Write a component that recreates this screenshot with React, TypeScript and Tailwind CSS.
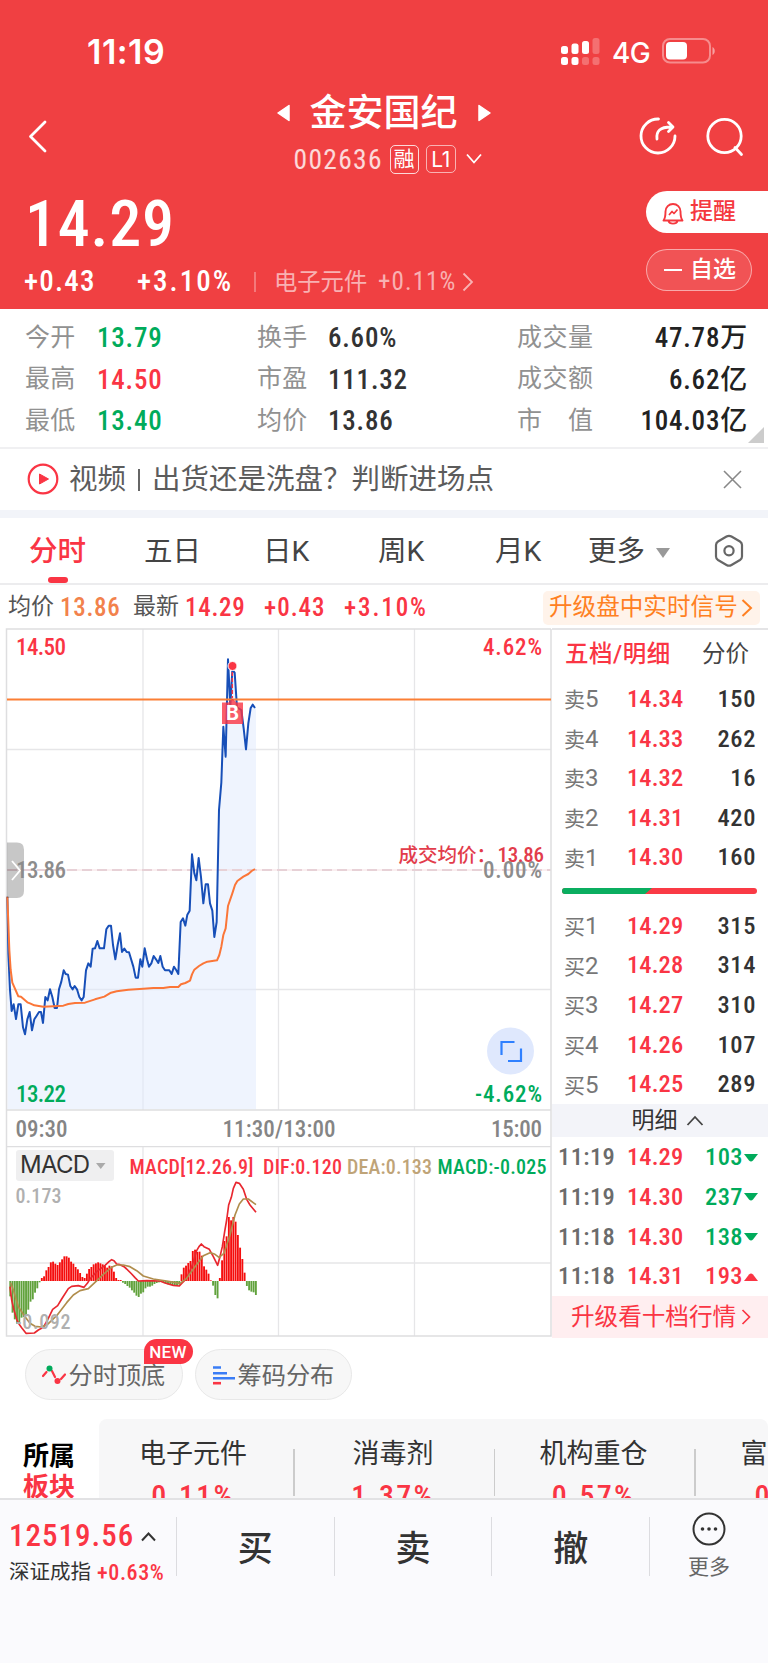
import React, { useState } from "react";

const stats = [
  [
    { label: "今开", value: "13.79", color: "text-[#00ab5b]" },
    { label: "换手", value: "6.60%", color: "text-[#333]" },
    { label: "成交量", value: "47.78万", color: "text-[#222]" },
  ],
  [
    { label: "最高", value: "14.50", color: "text-[#fa3544]" },
    { label: "市盈", value: "111.32", color: "text-[#333]" },
    { label: "成交额", value: "6.62亿", color: "text-[#222]" },
  ],
  [
    { label: "最低", value: "13.40", color: "text-[#00ab5b]" },
    { label: "均价", value: "13.86", color: "text-[#333]" },
    { label: "市　值", value: "104.03亿", color: "text-[#222]" },
  ],
];

const tabs = [
  { name: "分时", width: "w-[115px]" },
  { name: "五日", width: "w-[119px]" },
  { name: "日K", width: "w-[115px]" },
  { name: "周K", width: "w-[117px]" },
  { name: "月K", width: "w-[93px]" },
];

const sells = [
  ["卖5", "14.34", "150"],
  ["卖4", "14.33", "262"],
  ["卖3", "14.32", "16"],
  ["卖2", "14.31", "420"],
  ["卖1", "14.30", "160"],
];

const buys = [
  ["买1", "14.29", "315"],
  ["买2", "14.28", "314"],
  ["买3", "14.27", "310"],
  ["买4", "14.26", "107"],
  ["买5", "14.25", "289"],
];

const trades = [
  { time: "11:19", price: "14.29", amount: "103", up: false },
  { time: "11:19", price: "14.30", amount: "237", up: false },
  { time: "11:18", price: "14.30", amount: "138", up: false },
  { time: "11:18", price: "14.31", amount: "193", up: true },
];

const sectors = [
  { name: "电子元件", value: "0.11%" },
  { name: "消毒剂", value: "1.37%" },
  { name: "机构重仓", value: "0.57%" },
];

// chart series are kept at 3 units per pixel
const pricePoints =
  "22,830 25,1000 30,1110 35,1173 41,1153 48,1197 55,1153 62,1153 69,1222 75,1243 82,1198 89,1176 96,1231 103,1198 110,1187 117,1176 123,1176 129,1209 136,1131 143,1141 150,1108 157,1131 164,1164 171,1164 177,1108 184,1085 191,1051 197,1062 204,1064 211,1098 218,1108 224,1098 231,1108 238,1131 245,1141 251,1131 258,1051 265,1030 272,1040 278,986 285,985 292,963 299,985 312,985 319,928 326,917 333,917 339,975 346,1018 353,975 360,940 366,996 373,986 380,996 387,997 400,1040 407,1073 414,1073 421,1018 427,1040 434,985 441,1018 447,1040 454,1030 461,1008 468,1018 475,1029 481,1008 488,1040 495,1051 508,1051 515,1062 522,1040 529,1051 535,1062 542,906 549,895 556,917 562,884 569,872 576,703 583,760 589,781 596,714 603,771 610,850 617,793 624,793 630,850 637,872 643,951 650,906 657,570 664,488 670,320 677,410 684,118 691,258 697,150 704,158 711,262 724,270 731,325 738,388 745,310 752,264 758,254 765,264";

const avgPoints =
  "22,830 25,910 28,990 32,1050 37,1088 48,1113 55,1129 63,1130 82,1147 90,1150 103,1156 130,1160 190,1157 205,1152 225,1149 255,1148 285,1138 313,1130 333,1118 350,1114 385,1109 430,1106 460,1104 490,1104 510,1101 535,1101 543,1093 556,1089 570,1082 576,1063 583,1049 597,1038 610,1030 622,1025 651,1021 658,1005 664,980 670,945 677,925 684,858 697,820 705,795 712,783 730,770 745,762 755,753 765,747";

const difPoints =
  "30,560 35,600 42,630 50,658 57,672 65,683 78,700 103,699 115,690 130,682 145,655 158,628 173,617 185,597 205,566 215,559 235,557 252,562 262,550 270,537 290,515 315,496 327,485 335,479 342,482 350,492 360,494 372,500 380,507 395,522 405,533 415,543 440,542 480,543 495,549 520,556 538,558 545,550 560,535 575,500 590,452 597,440 604,432 612,440 628,448 640,470 653,496 660,470 667,440 674,395 680,360 686,315 694,292 700,265 708,247 718,250 730,268 740,298 750,315 768,337";

const deaPoints =
  "32,548 40,570 55,620 75,650 90,670 105,679 125,681 145,671 170,647 200,608 220,585 240,572 265,566 285,547 310,523 335,502 350,495 370,495 390,500 410,512 430,528 460,537 500,543 540,550 560,535 585,500 610,467 630,458 645,463 657,472 672,460 690,405 705,345 718,312 730,297 745,297 768,314";

const macdBars = [
  -46, -95, -115, -128, -124, -110, -108, -103, -86, -62, -55, -35, -22, -4, 9, 14, 32, 42, 56, 58, 52, 48, 56, 65, 74,
  74, 70, 58, 52, 42, 35, 24, 12, 9, 22, 36, 42, 50, 53, 56, 53, 50, 45, 40, 46, 44, 28, 9, 3, 3, -5, -9, -15, -20,
  -28, -35, -44, -48, -38, -34, -22, -17, -17, -14, -9, -6, -4, -2, -4, -7, -10, -12, -12, -12, -13, -11, 20, 40, 46, 54,
  60, 90, 94, 87, 88, 76, 44, 34, 22, 2, -14, -42, -52, 9, 62, 120, 134, 192, 182, 192, 178, 138, 100, 66, 25, -15, -28,
  -32, -34, -42,
];

const StatusBar = () => (
  <div className="flex h-[88px] items-start justify-between pt-[31px] pl-[87px] pr-[52px]">
    <span className="pt-px font-['Inter'] text-[34px] leading-10 font-semibold tracking-[0.5px]">11:19</span>
    <div className="flex items-center gap-[12px] pt-px">
      <svg width="39" height="40" viewBox="0 0 39 40" fill="#fff">
        <rect x="0" y="14" width="7" height="8" rx="2.5" />
        <rect x="10.5" y="11.5" width="7" height="10.5" rx="2.5" />
        <rect x="21" y="9" width="7" height="13" rx="2.5" />
        <rect x="31.5" y="6" width="7" height="16" rx="2.5" opacity=".25" />
        <rect x="0" y="25" width="7" height="8" rx="2.5" />
        <rect x="10.5" y="25" width="7" height="8" rx="2.5" />
        <rect x="21" y="25" width="7" height="8" rx="2.5" opacity=".25" />
        <rect x="31.5" y="25" width="7" height="8" rx="2.5" opacity=".25" />
      </svg>
      <span className="pt-0.5 font-['Inter'] text-[28px] leading-[38px] font-medium tracking-[-0.6px]">4G</span>
      <svg width="54" height="40" viewBox="0 0 54 40">
        <rect x="1" y="7" width="47" height="23.5" rx="7" fill="none" stroke="#fff" strokeOpacity=".4" strokeWidth="2" />
        <rect x="4" y="10" width="21" height="17.5" rx="4" fill="#fff" />
        <path d="M50.5 15v8c3-1.5 3-6.5 0-8z" fill="#fff" opacity=".5" />
      </svg>
    </div>
  </div>
);

const Header = () => (
  <div className="h-[309px] bg-[#f04042] text-white">
    <StatusBar />
    <div className="flex h-[96px] justify-between pl-[27px] pr-[24px]">
      <svg className="mt-[31px]" width="22" height="36" viewBox="0 0 22 36" fill="none" stroke="#fff" strokeWidth="2.8" strokeLinecap="round" strokeLinejoin="round">
        <path d="M18 3 3.500 17.500 18 32" />
      </svg>
      <div className="ml-[79px] flex flex-col items-center">
        <div className="flex h-[50px] items-center gap-5">
          <svg width="13" height="18" viewBox="0 0 13 18" fill="#fff" stroke="#fff" strokeWidth="1.5" strokeLinejoin="round">
            <path d="M12 1.500v15L1 9z" />
          </svg>
          <span className="pt-px text-[37px] leading-none font-medium">金安国纪</span>
          <svg width="13" height="18" viewBox="0 0 13 18" fill="#fff" stroke="#fff" strokeWidth="1.5" strokeLinejoin="round">
            <path d="M1 1.500v15L12 9z" />
          </svg>
        </div>
        <div className="mt-px flex h-10 items-center pl-[8px]">
          <span className="w-[96px] pt-px text-[27.5px] tracking-[1.3px] text-white/80 [font-stretch:75%]">002636</span>
          <span className="flex h-[29px] w-[29px] items-center justify-center rounded-[5px] border-[1.5px] border-white/80 text-[21px] leading-none">融</span>
          <span className="ml-[7px] flex h-[28px] w-[30px] items-center justify-center rounded-[5px] border-[1.5px] border-white/60 font-['Inter'] text-[21px] leading-none tracking-[-0.5px]">L1</span>
          <svg className="ml-[10px]" width="16" height="12" viewBox="0 0 16 12" fill="none" stroke="#fff" strokeWidth="1.8">
            <path d="M1 1.500 8 9.500l7-8" />
          </svg>
        </div>
      </div>
      <div className="flex gap-[25px] pt-[28px]">
        <svg width="40" height="42" viewBox="0 0 40 42" fill="none" stroke="#fff" strokeWidth="2.8" strokeLinecap="round" strokeLinejoin="round">
          <path d="M19.500 3A17 17 0 1 0 36 20" />
          <path d="M18 23c-1-8 3-12 14-12M29.500 6.500 34 11l-4.500 4.500" />
        </svg>
        <svg width="40" height="42" viewBox="0 0 40 42" fill="none" stroke="#fff" strokeWidth="2.8" strokeLinecap="round">
          <circle cx="20.5" cy="20" r="16.7" />
          <path d="m31 31.500 6.500 7" />
        </svg>
      </div>
    </div>
    <div className="flex h-[125px] justify-between">
      <div className="flex flex-col">
        <span className="mt-[9px] pl-[25px] text-[64px] leading-[64px] font-medium tracking-[0.8px] [font-stretch:75%]">14.29</span>
        <div className="mt-[8px] flex h-[34px] items-center pl-[24px]">
          <span className="w-[113px] text-[29px] font-medium tracking-[1.2px] [font-stretch:75%]">+0.43</span>
          <span className="w-[117px] text-[29px] font-medium tracking-[2px] [font-stretch:75%]">+3.10%</span>
          <span className="h-[20px] w-[2px] bg-white/30" />
          <span className="ml-[18px] w-[104px] text-[23.3px] text-white/60">电子元件</span>
          <span className="w-[79px] text-[25px] tracking-[1.1px] text-white/60 [font-stretch:75%]">+0.11%</span>
          <svg className="ml-[5px]" width="12" height="20" viewBox="0 0 12 20" fill="none" stroke="#fff" strokeOpacity=".6" strokeWidth="1.8">
            <path d="M1.500 1.500 10 10l-8.500 8.500" />
          </svg>
        </div>
      </div>
      <div className="flex w-[122px] flex-col gap-4 pt-[7px]">
        <div className="flex h-[42px] items-center rounded-l-full bg-white pl-4 pt-px text-[23px] font-medium text-[#f5383e]">
          <svg className="mr-1.5" width="22" height="24" viewBox="0 0 22 24" fill="none" stroke="#f5383e" strokeWidth="1.9" strokeLinejoin="round">
            <path d="M3 19.500H1.500c2-2.500 2-4 2-9a7.500 7.500 0 0 1 15 0c0 5 0 6.500 2 9zM6.500 20c1 3.500 8 3.500 9 0" />
            <path d="m7 14 3-3.500 2 2 3.500-4" strokeWidth="1.7" />
          </svg>
          提醒
        </div>
        <div className="flex h-[42px] w-[106px] items-center rounded-full border-[1.5px] border-white/50 bg-white/10 pl-[17px] text-[23px] font-medium">
          <span className="mr-[8px] h-[2px] w-[18px] bg-white" />
          <span className="pt-px">自选</span>
        </div>
      </div>
    </div>
  </div>
);

const Stats = () => (
  <div className="relative h-[140px] border-b-2 border-[#f0f0f2] pt-[7px]">
    {stats.map((row, i) => (
      <div key={i} className="flex h-[41.5px] items-center pt-px pl-[25px] pr-[20px] text-[27px] font-medium tracking-[0.8px]">
        <span className="w-[72px] text-[25px] font-normal tracking-[0.2px] text-[#919191]">{row[0].label}</span>
        <span className={`w-[160px] pt-[2px] [font-stretch:75%] ${row[0].color}`}>{row[0].value}</span>
        <span className="w-[71px] text-[25px] font-normal tracking-[0.2px] text-[#919191]">{row[1].label}</span>
        <span className={`w-[189px] pt-[2px] [font-stretch:75%] ${row[1].color}`}>{row[1].value}</span>
        <span className="text-[25px] font-normal tracking-[0.5px] text-[#919191]">{row[2].label}</span>
        <span className={`flex-1 pt-[2px] text-right [font-stretch:75%] ${row[2].color}`}>{row[2].value}</span>
      </div>
    ))}
    <svg className="absolute right-1 bottom-[4px]" width="16" height="16" viewBox="0 0 16 16" fill="#ccc">
      <path d="M16 0v16H0z" />
    </svg>
  </div>
);

const VideoBar = () => (
  <div className="flex h-[69px] items-center border-b-8 border-[#f2f4f9] pl-[27px] pr-[26px] text-[28.5px] text-[#5c5c5c]">
    <svg className="-mt-[2px]" width="32" height="32" viewBox="0 0 32 32">
      <circle cx="16" cy="16" r="14.3" fill="none" stroke="#fa3544" strokeWidth="2.2" />
      <path d="M12.500 11v10L21.500 16z" fill="#fa3544" stroke="#fa3544" strokeLinejoin="round" />
    </svg>
    <span className="ml-2.5 pt-[2px]">视频</span>
    <span className="mx-[12px] h-[22px] w-[2px] bg-[#666]" />
    <span className="pt-[2px]">出货还是洗盘？判断进场点</span>
    <svg className="ml-auto" width="19" height="19" viewBox="0 0 19 19" stroke="#888" strokeWidth="1.6">
      <path d="m1 1 17 17M18 1 1 18" />
    </svg>
  </div>
);

const Tabs = () => {
  const [active, setActive] = useState("分时");

  return (
    <div className="flex h-[67px] items-stretch border-b-2 border-[#ececee] pl-[29px] text-[28.5px] text-[#444]">
      {tabs.map((tab) => (
        <button key={tab.name} onClick={() => setActive(tab.name)} className={`flex ${tab.width}`}>
          <span className={`relative flex h-full items-center pt-[4px] ${active === tab.name ? "font-medium text-[#fa3544]" : ""}`}>
            {tab.name}
            {active === tab.name && (
              <span className="absolute bottom-0 left-[19px] h-[6px] w-[20px] rounded-[3px] bg-[#fa3544]" />
            )}
          </span>
        </button>
      ))}
      <div className="flex items-center pt-[4px]">
        <span>更多</span>
        <svg className="ml-[11px]" width="14" height="10" viewBox="0 0 14 10" fill="#999">
          <path d="M0 0h14L7 10z" />
        </svg>
      </div>
      <svg className="mt-[16px] ml-[44px]" width="30" height="34" viewBox="0 0 30 34" fill="none" stroke="#666" strokeWidth="2.2" strokeLinejoin="round">
        <path d="M12.500 2.500q2.500-1.400 5 0l8.500 5q2 1.300 2 3.500v11.500q0 2.200-2 3.500l-8.500 5q-2.500 1.400-5 0L4 26q-2-1.300-2-3.500V11q0-2.200 2-3.500z" />
        <circle cx="15" cy="16.8" r="4.6" />
      </svg>
    </div>
  );
};

const QuoteLine = () => (
  <div className="flex h-[43px] items-center pt-[2px] pl-[8px] pr-2 text-[25px] font-medium tracking-[0.7px] text-[#fa3544] [font-stretch:75%]">
    <span className="w-[52px] text-[23px] font-normal tracking-normal text-[#555]">均价</span>
    <span className="w-[73px] text-[#f2824c]">13.86</span>
    <span className="w-[52px] text-[23px] font-normal tracking-normal text-[#555]">最新</span>
    <span className="w-[79px]">14.29</span>
    <span className="w-[80px] tracking-[1px]">+0.43</span>
    <span className="tracking-[1.9px]">+3.10%</span>
    <div className="ml-auto flex h-[34px] w-[217px] items-center rounded-[5px] bg-[#fff3ea] pl-[6px] text-[23.6px] font-normal tracking-normal text-[#ff8022]">
      升级盘中实时信号
      <svg className="ml-[3px]" width="12" height="20" viewBox="0 0 12 20" fill="none" stroke="#ff8022" strokeWidth="2">
        <path d="M1.500 2 10 10l-8.500 8" />
      </svg>
    </div>
  </div>
);

const PriceChart = () => (
  <svg width="552" height="518" viewBox="0 628 552 518" className="block text-[23px] font-medium [font-stretch:75%]">
    <g stroke="#e6e6e8" strokeWidth="1.3" fill="none">
      <path d="M143 629v481M278.500 629v481M414.500 629v481M7 749.500h544M7 989.500h544" />
    </g>
    <g transform="translate(0 620) scale(.33333)">
      <polygon points={`${pricePoints} 768,264 768,1468 22,1468`} fill="#dfe9fd" fillOpacity=".5" />
    </g>
    <path d="M7 870h544" stroke="#d9c3cb" strokeWidth="1.8" strokeDasharray="10 5" />
    <path d="M7 870h544" stroke="#f6dfe2" strokeWidth="1" />
    <g fill="none" stroke="#dedee0" strokeWidth="1.5">
      <path d="M6.500 1146V629H551M6.500 1110H551V629M551 1110v36" />
    </g>
    <g transform="translate(0 620) scale(.33333)" fill="none" strokeLinejoin="round">
      <polyline points={pricePoints} stroke="#174fb8" strokeWidth="6" />
      <polyline points={avgPoints} stroke="#fb7638" strokeWidth="6" />
    </g>
    <path d="M7 699.500h544" stroke="#fb7f35" strokeWidth="2.2" />

    <path d="M232.300 672v26" stroke="#fa3544" strokeWidth="1.5" strokeDasharray="4 2" />
    <circle cx="232.5" cy="666" r="4.5" fill="#fa3544" stroke="#fff" strokeWidth="1" />
    <path d="M222 702.500h6.500l4-4 4 4h6.500V724H222z" fill="#fa3544" fillOpacity=".8" />
    <text x="232.5" y="720" fontSize="19.5" className="font-['Inter'] font-bold" fill="#fff" textAnchor="middle">B</text>

    <path d="M7 842.500h10q7 0 7 7V891q0 7-7 7H7z" fill="#000" fillOpacity=".22" />
    <path d="m12 861 8 9.500-8 9.500" fill="none" stroke="#fff" strokeWidth="1.8" />

    <text x="16" y="654.5" textLength="50" fill="#fa3544">14.50</text>
    <text x="16" y="878" textLength="50" fill="#8c8c8c">13.86</text>
    <text x="16" y="1101.5" textLength="50" fill="#00ab5b">13.22</text>
    <text x="542" y="654.5" textLength="59" textAnchor="end" fill="#fa3544">4.62%</text>
    <text x="542" y="878" textLength="59" textAnchor="end" fill="#8c8c8c">0.00%</text>
    <text x="542" y="1101.5" textLength="67" textAnchor="end" fill="#00ab5b">-4.62%</text>
    <text x="398.5" y="862" fontSize="19.5" fill="#e23c4b">成交均价：</text>
    <text x="497.5" y="862" fontSize="21" textLength="46.5" fill="#e23c4b">13.86</text>

    <circle cx="510.5" cy="1051" r="23.5" fill="#dfe8fd" />
    <path d="M501.500 1055v-13h13M508 1061h13v-12.500" fill="none" stroke="#2f80ff" strokeWidth="2.2" />

    <g fontSize="23" fill="#858585">
      <text x="15.5" y="1137" textLength="52">09:30</text>
      <text x="222.5" y="1137" textLength="113">11:30/13:00</text>
      <text x="542" y="1137" textLength="51" textAnchor="end">15:00</text>
    </g>
  </svg>
);

const MacdChart = () => (
  <svg width="552" height="191" viewBox="0 1146 552 191" className="block text-[20px] font-medium [font-stretch:75%]">
    <path d="M143 1147v189M278.500 1147v189M414.500 1147v189M7 1263h544" stroke="#e6e6e8" strokeWidth="1.3" />
    <path d="M6.500 1146.500H551V1336H6.500z" fill="none" stroke="#dedee0" strokeWidth="1.5" />
    <g transform="translate(0 1100) scale(.33333)" fill="none">
      {macdBars.map((v, i) => (
        <rect
          key={i}
          x={28 + i * 6.76}
          y={v > 0 ? 543 - v : 543}
          width="5.6"
          height={Math.abs(v)}
          fill={v > 0 ? "#f50d0d" : "#61a23c"}
        />
      ))}
      <polyline points={difPoints} stroke="#e8272f" strokeWidth="5" strokeLinejoin="round" />
      <polyline points={deaPoints} stroke="#b08d4c" strokeWidth="5" strokeLinejoin="round" />
    </g>
    <rect x="16" y="1150" width="98" height="31" rx="3" fill="#efeff0" />
    <text x="20" y="1173" fontSize="24" textLength="70" className="font-['Inter'] font-normal" fill="#333">MACD</text>
    <path d="M96 1163h9.500l-4.750 6z" fill="#aaa" />
    <text x="129.5" y="1173.5" textLength="124" fill="#fa3544">MACD[12.26.9]</text>
    <text x="263" y="1173.5" textLength="79" fill="#fa3544">DIF:0.120</text>
    <text x="347" y="1173.5" textLength="85" fill="#bfa478">DEA:0.133</text>
    <text x="437.5" y="1173.5" textLength="109" fill="#00ab5b">MACD:-0.025</text>
    <g fill="#b0b0b0">
      <text x="15.5" y="1203" textLength="46">0.173</text>
      <text x="15.5" y="1328.5" textLength="55">-0.092</text>
    </g>
  </svg>
);

const LevelRow = ({ row }: { row: string[] }) => (
  <div className="flex h-[39.6px] items-center pt-px pl-[12px] pr-[12px] text-[24.5px] font-medium tracking-[0.6px] [font-stretch:75%]">
    <span className="w-[63px] text-[21px] font-normal tracking-normal text-[#777] [font-stretch:100%]">
      {row[0][0]}
      <span className="text-[24px]">{row[0][1]}</span>
    </span>
    <span className="tracking-[0.1px] text-[#fa3544]">{row[1]}</span>
    <span className="ml-auto text-[#333]">{row[2]}</span>
  </div>
);

const OrderBook = () => (
  <div className="h-[708px] w-[216px] border-t-2 border-[#e4e4e6]">
    <div className="flex h-[49px] items-center pl-[13px] text-[23.5px] leading-none">
      <span className="font-medium tracking-[0.5px] text-[#fa3544]">五档/明细</span>
      <span className="ml-auto pr-[19px] text-[#444]">分价</span>
    </div>
    {sells.map((row) => (
      <LevelRow key={row[0]} row={row} />
    ))}
    <div className="flex h-[29px] items-center pl-[10px]">
      <svg width="195" height="6" viewBox="0 0 195 6">
        <rect width="195" height="6" rx="3" fill="#fa3a45" />
        <path d="M3 0h87l-7 6H3a3 3 0 0 1 0-6z" fill="#0aae60" />
      </svg>
    </div>
    {buys.map((row) => (
      <LevelRow key={row[0]} row={row} />
    ))}
    <div className="flex h-[33.5px] items-center justify-center bg-[#f3f4f9] pt-px pl-[15px] text-[23px] text-[#333]">
      明细
      <svg className="ml-2" width="18" height="12" viewBox="0 0 18 12" fill="none" stroke="#444" strokeWidth="1.8">
        <path d="m1.500 10 7.500-8 7.500 8" />
      </svg>
    </div>
    {trades.map((t, i) => (
      <div key={i} className="flex h-[39.6px] items-center pt-px pr-[10px] pl-[6px] text-[24.5px] font-medium tracking-[0.4px] [font-stretch:75%]">
        <span className="w-[69px] text-[#6b6b6b]">{t.time}</span>
        <span className="tracking-[0.1px] text-[#fa3544]">{t.price}</span>
        <span className={`ml-auto ${t.up ? "text-[#fa3544]" : "text-[#00ab5b]"}`}>{t.amount}</span>
        <svg className="ml-[1px]" width="14" height="8" viewBox="0 0 14 8" fill={t.up ? "#fa3544" : "#00ab5b"}>
          <path d={t.up ? "M0 8 5 1.500q2-2 4 0L14 8z" : "M0 0h14L9 6.500q-2 2-4 0z"} />
        </svg>
      </div>
    ))}
    <div className="flex h-[42px] items-center bg-[#ffeef0] pt-px pl-[19px] text-[23.6px] text-[#fa3544]">
      升级看十档行情
      <svg className="ml-[5px]" width="10" height="18" viewBox="0 0 10 18" fill="none" stroke="#fa3544" strokeWidth="1.7">
        <path d="m1.500 2 7 7-7 7" />
      </svg>
    </div>
  </div>
);

const Tools = () => (
  <div className="flex h-[82px] gap-[12px] pt-[12px] pl-[24.5px] text-[24.2px] text-[#666]">
    <div className="relative flex h-[51px] w-[158px] items-center rounded-full border border-[#e8e8e8] bg-[#f7f7f7] pl-[16px]">
      <svg className="mr-[3px]" width="24" height="20" viewBox="0 0 24 20">
        <path d="m1 11 3.500-4M10 6l3 6M19 14l4-4.500" fill="none" stroke="#fa3544" strokeWidth="2.2" strokeLinecap="round" />
        <circle cx="7.5" cy="3.5" r="3" fill="#00ab5b" />
        <circle cx="15.5" cy="16" r="3" fill="#fa3544" />
      </svg>
      <span className="pt-[3px]">分时顶底</span>
      <span className="absolute -top-[11px] -right-[11px] flex h-[25px] w-[49px] items-center justify-center rounded-full rounded-bl-[3px] bg-[#fa3544] pt-[2px] text-[17px] font-medium tracking-[0.3px] text-white">
        NEW
      </span>
    </div>
    <div className="flex h-[51px] w-[157px] items-center rounded-full border border-[#e8e8e8] bg-[#f7f7f7] pl-[17px]">
      <svg className="mr-[3px]" width="22" height="20" viewBox="0 0 22 20" strokeWidth="2.6">
        <path d="M0 2.500h8M0 8.200h14M0 13.200h22" stroke="#3a7df6" />
        <path d="M0 18.200h8" stroke="#fa3544" />
      </svg>
      <span className="pt-[3px]">筹码分布</span>
    </div>
  </div>
);

const Sectors = () => (
  <div className="flex h-[79px] overflow-hidden">
    <div className="flex w-[99px] shrink-0 flex-col pt-[22px] pl-[23px] text-[26px] leading-[31px] font-bold">
      <span className="text-black">所属</span>
      <span className="text-[#fa3544]">板块</span>
    </div>
    <div className="flex w-[669px] shrink-0 overflow-hidden rounded-t-[8px] bg-[#f7f7f8]">
      {sectors.map((s, i) => (
        <div key={s.name} className={`flex shrink-0 ${i === 0 ? "w-[195.500px]" : "w-[200.500px]"}`}>
          <div className={`flex flex-1 flex-col items-center pt-[17px] ${i === 0 ? "pr-[6px]" : "pr-[2px]"}`}>
            <span className="text-[27px] leading-[36px] text-[#333]">{s.name}</span>
            <span className="mt-[6px] text-[30px] leading-[36px] font-medium tracking-[2.2px] text-[#fa3544] [font-stretch:75%]">{s.value}</span>
          </div>
          <span className="mt-[30px] h-[47px] w-[1.5px] bg-[#ccc]" />
        </div>
      ))}
      <div className="shrink-0 pt-[17px] pl-[45px]">
        <div className="text-[27px] leading-[36px] whitespace-nowrap text-[#333]">富</div>
        <div className="mt-[6px] pl-[14px] text-[30px] leading-[36px] font-medium text-[#fa3544] [font-stretch:75%]">0</div>
      </div>
    </div>
  </div>
);

const BottomBar = () => (
  <div className="flex h-[166px] border-t-2 border-[#e2e2e4] bg-[#fafafd] pt-[17px] text-[#333]">
    <div className="w-[176px] pl-[9px]">
      <div className="flex h-[38px] items-center pt-px text-[31px] font-medium tracking-[1px] text-[#fa3544] [font-stretch:75%]">
        <span className="w-[124px]">12519.56</span>
        <svg className="ml-[8px]" width="15" height="10" viewBox="0 0 15 10" fill="none" stroke="#333" strokeWidth="2">
          <path d="m1 8.500 6.500-7 6.500 7" />
        </svg>
      </div>
      <div className="flex h-[33px] items-center pt-px text-[20.5px]">
        深证成指
        <span className="ml-[6px] text-[22px] font-medium tracking-[0.6px] text-[#fa3544] [font-stretch:75%]">+0.63%</span>
      </div>
    </div>
    {["买", "卖", "撤"].map((name) => (
      <button
        key={name}
        className="flex h-[59px] w-[157.7px] items-center justify-center border-l-[1.5px] border-[#dcdce0] pt-[7px] text-[35px] font-medium"
      >
        {name}
      </button>
    ))}
    <div className="flex h-[59px] flex-1 flex-col items-center border-l-[1.5px] border-[#dcdce0] text-[21px] text-[#666]">
      <svg className="-mt-[6px] shrink-0" width="36" height="36" viewBox="0 0 36 36">
        <circle cx="18" cy="18" r="15.5" fill="none" stroke="#333" strokeWidth="2" />
        <g fill="#333">
          <circle cx="11.5" cy="18" r="1.8" />
          <circle cx="18" cy="18" r="1.8" />
          <circle cx="24.5" cy="18" r="1.8" />
        </g>
      </svg>
      <span className="mt-[5px]">更多</span>
    </div>
  </div>
);

export default function App() {
  return (
    <div className="h-[1663px] w-[768px] overflow-hidden bg-white font-['Roboto','Noto_Sans_CJK_SC',sans-serif]">
      <Header />
      <Stats />
      <VideoBar />
      <Tabs />
      <QuoteLine />
      <div className="flex h-[709px]">
        <div className="w-[552px]">
          <PriceChart />
          <MacdChart />
        </div>
        <OrderBook />
      </div>
      <Tools />
      <Sectors />
      <BottomBar />
    </div>
  );
}
